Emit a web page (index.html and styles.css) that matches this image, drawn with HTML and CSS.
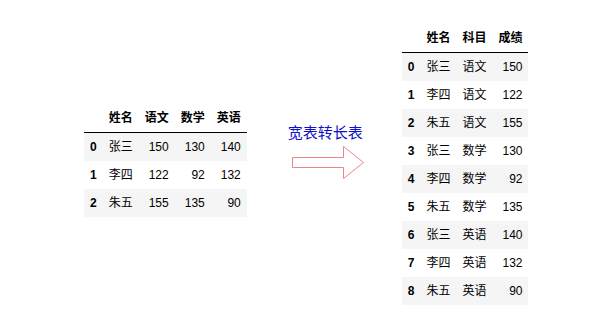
FILE: index.html
```html
<!DOCTYPE html>
<html lang="zh">
<head>
<meta charset="utf-8">
<title>宽表转长表</title>
<link rel="stylesheet" href="styles.css">
</head>
<body>
<div class="page">
  <table class="df df-wide">
    <thead>
      <tr><th></th><th>姓名</th><th>语文</th><th>数学</th><th>英语</th></tr>
    </thead>
    <tbody>
      <tr><th>0</th><td>张三</td><td>150</td><td>130</td><td>140</td></tr>
      <tr><th>1</th><td>李四</td><td>122</td><td>92</td><td>132</td></tr>
      <tr><th>2</th><td>朱五</td><td>155</td><td>135</td><td>90</td></tr>
    </tbody>
  </table>

  <div class="mid">
    <div class="label">宽表转长表</div>
    <svg class="arrow" width="73" height="34" viewBox="0 0 73 34">
      <polygon points="0.5,11.5 51.5,11.5 51.5,0.5 71.5,16.5 51.5,32.5 51.5,21.5 0.5,21.5" fill="#ffffff" stroke="#ec8585" stroke-width="1"/>
    </svg>
  </div>

  <table class="df df-long">
    <thead>
      <tr><th></th><th>姓名</th><th>科目</th><th>成绩</th></tr>
    </thead>
    <tbody>
      <tr><th>0</th><td>张三</td><td>语文</td><td>150</td></tr>
      <tr><th>1</th><td>李四</td><td>语文</td><td>122</td></tr>
      <tr><th>2</th><td>朱五</td><td>语文</td><td>155</td></tr>
      <tr><th>3</th><td>张三</td><td>数学</td><td>130</td></tr>
      <tr><th>4</th><td>李四</td><td>数学</td><td>92</td></tr>
      <tr><th>5</th><td>朱五</td><td>数学</td><td>135</td></tr>
      <tr><th>6</th><td>张三</td><td>英语</td><td>140</td></tr>
      <tr><th>7</th><td>李四</td><td>英语</td><td>132</td></tr>
      <tr><th>8</th><td>朱五</td><td>英语</td><td>90</td></tr>
    </tbody>
  </table>
</div>
</body>
</html>
```

FILE: styles.css
```css
html, body {
  margin: 0;
  padding: 0;
  background: #ffffff;
}

body {
  font-family: "Liberation Sans", "Noto Sans CJK SC", sans-serif;
  color: #000000;
}

.page {
  display: flex;
  align-items: flex-start;
  padding: 24px 0 0 84px;
}

.df {
  border-collapse: collapse;
  border: none;
  font-size: 12px;
  table-layout: auto;
}

.df th,
.df td {
  padding: 6px;
  line-height: 16px;
  text-align: right;
  vertical-align: middle;
  white-space: nowrap;
}

.df th {
  font-weight: bold;
}

.df td {
  font-weight: normal;
}

.df thead th {
  border-bottom: 1px solid #000000;
}

.df tbody tr:nth-child(odd) {
  background: #f5f5f5;
}

.df-wide {
  margin-top: 80px;
}

.mid {
  margin-left: 41px;
  margin-top: 100px;
  display: flex;
  flex-direction: column;
}

.label {
  font-size: 15px;
  line-height: 18px;
  color: #1010c8;
  letter-spacing: 0;
}

.arrow {
  display: block;
  margin-top: 4px;
  margin-left: 4px;
}

.df-long {
  margin-left: 37px;
}
```
